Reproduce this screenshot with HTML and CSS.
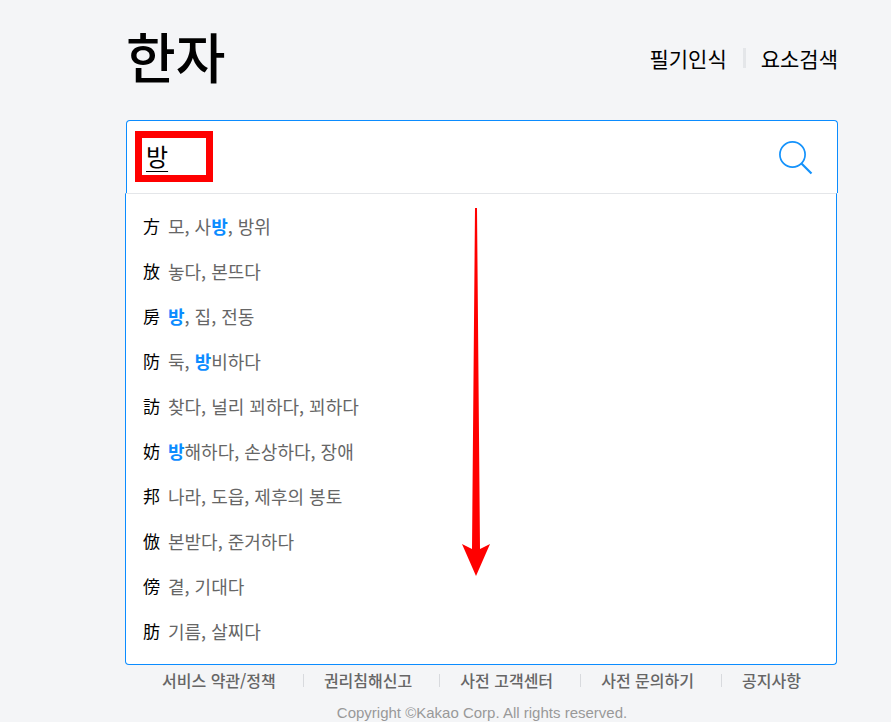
FILE: index.html
```html
<!DOCTYPE html>
<html lang="ko">
<head>
    <meta charset="UTF-8">
    <meta name="viewport" content="width=device-width, initial-scale=1.0">
    <title>한자</title>
    <link rel="stylesheet" href="styles.css">
</head>
<body>
    <div class="container">
        <header class="header">
            <h1 class="logo">한자</h1>
            <nav class="tools">
                <a href="#">필기인식</a>
                <a href="#">요소검색</a>
            </nav>
        </header>

        <main class="search">
            <form class="search-form">
                <input type="text" class="search-input" name="q" value="방" aria-label="한자 검색" autocomplete="off">
                <button type="submit" class="search-button" aria-label="검색">
                    <svg width="36" height="36" viewBox="0 0 36 36" fill="none" stroke="#1492fb">
                        <circle cx="15.5" cy="15.5" r="12.6" stroke-width="1.7"/>
                        <path d="M24.5 24.5L34.5 34.5" stroke-width="2.2"/>
                    </svg>
                </button>
                <span class="marker"></span>
            </form>

            <ul class="suggest">
                <li><a href="#"><span class="hanja">方</span><span>모, 사<b>방</b>, 방위</span></a></li>
                <li><a href="#"><span class="hanja">放</span><span>놓다, 본뜨다</span></a></li>
                <li><a href="#"><span class="hanja">房</span><span><b>방</b>, 집, 전동</span></a></li>
                <li><a href="#"><span class="hanja">防</span><span>둑, <b>방</b>비하다</span></a></li>
                <li><a href="#"><span class="hanja">訪</span><span>찾다, 널리 꾀하다, 꾀하다</span></a></li>
                <li><a href="#"><span class="hanja">妨</span><span><b>방</b>해하다, 손상하다, 장애</span></a></li>
                <li><a href="#"><span class="hanja">邦</span><span>나라, 도읍, 제후의 봉토</span></a></li>
                <li><a href="#"><span class="hanja">倣</span><span>본받다, 준거하다</span></a></li>
                <li><a href="#"><span class="hanja">傍</span><span>곁, 기대다</span></a></li>
                <li><a href="#"><span class="hanja">肪</span><span>기름, 살찌다</span></a></li>
            </ul>

            <svg class="arrow" width="30" height="370" viewBox="0 0 30 370" fill="#f00">
                <path d="M14 1H16L19 342L29 337L15 369L1 337L11 342Z"/>
            </svg>
        </main>

        <footer class="footer">
            <ul class="footer-links">
                <li><a href="#">서비스 약관/정책</a></li>
                <li><a href="#">권리침해신고</a></li>
                <li><a href="#">사전 고객센터</a></li>
                <li><a href="#">사전 문의하기</a></li>
                <li><a href="#">공지사항</a></li>
            </ul>
            <p class="copyright">Copyright ©Kakao Corp. All rights reserved.</p>
        </footer>
    </div>
</body>
</html>
```
FILE: styles.css
```css
* {
    box-sizing: border-box;
}
body {
    margin: 0;
    font-family: 'Noto Sans CJK KR', sans-serif;
    background-color: #f4f5f7;
    overflow-x: hidden;
}
a {
    color: inherit;
    text-decoration: none;
}
ul {
    margin: 0;
    padding: 0;
    list-style: none;
}
.container {
    padding: 0 53px 0 126px;
}
.header {
    display: flex;
    align-items: center;
    justify-content: space-between;
    height: 120px;
    padding-bottom: 5px;
}
.logo {
    margin: 0;
    font-size: 54px;
    font-weight: 500;
    line-height: 108px;
    padding-bottom: 4px;
    color: #000;
}
.tools {
    display: flex;
    align-items: center;
    font-size: 21px;
    line-height: 24px;
    color: #000;
}
.tools a + a {
    display: flex;
    align-items: center;
}
.tools a + a::before {
    content: "";
    width: 3px;
    height: 20px;
    margin: 0 15px 0 16px;
    background-color: #e4e6e9;
}
.search {
    position: relative;
}
.search-form {
    position: relative;
    display: flex;
    align-items: center;
    height: 73px;
    padding: 0 24px 0 19px;
    background-color: #fff;
    border: 1px solid #0b8cff;
    border-bottom: 0;
    border-radius: 4px 4px 0 0;
}
.search-input {
    flex: 1;
    min-width: 0;
    padding: 0 0 4px;
    border: 0;
    outline: 0;
    background: none;
    font: inherit;
    font-size: 24px;
    color: #000;
    text-decoration: underline 1px;
    text-underline-offset: 5px;
    text-decoration-skip-ink: none;
}
.search-button {
    display: flex;
    padding: 0;
    border: 0;
    background: none;
    cursor: pointer;
}
/* red frame over the typed word */
.marker {
    position: absolute;
    left: 8px;
    top: 10px;
    width: 78px;
    height: 51px;
    border: 7px solid #f00;
}
.suggest {
    margin: 0 1px 0 -1px;
    padding: 9px 17px 11px;
    background-color: #fff;
    border: 1px solid #0b8cff;
    border-top-color: #e4e6e9;
    border-radius: 0 0 4px 4px;
}
.suggest a {
    display: flex;
    align-items: center;
    gap: 8px;
    height: 45px;
    font-size: 18px;
    color: #666;
}
.suggest b {
    color: #0b8cff;
}
.suggest .hanja {
    width: 17px;
    font-size: 17px;
    color: #000;
}
.arrow {
    position: absolute;
    left: 335px;
    top: 87px;
}
.footer {
    padding-top: 3px;
}
.footer-links {
    display: flex;
    justify-content: space-between;
    padding: 0 37px 0 36px;
    font-size: 16px;
    font-weight: 500;
    line-height: 24px;
    color: #666;
}
.footer-links li {
    display: flex;
    align-items: center;
}
.footer-links li + li::before {
    content: "";
    width: 1px;
    height: 13px;
    margin-right: 20px;
    background-color: #d8dade;
}
.copyright {
    margin: 12px 0 0;
    font-family: 'Liberation Sans', Arial, sans-serif;
    font-size: 15px;
    line-height: 18px;
    text-align: center;
    color: #999;
}
```
